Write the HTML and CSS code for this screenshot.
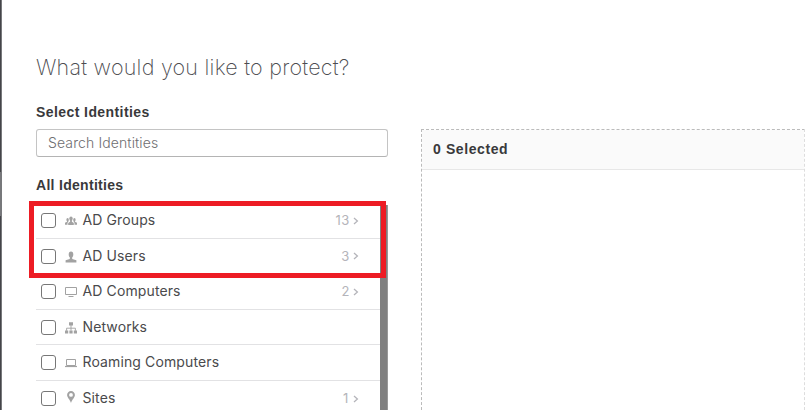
FILE: index.html
```html
<!DOCTYPE html>
<html lang="en">
<head>
<meta charset="utf-8">
<title>Select Identities</title>
<link rel="stylesheet" href="styles.css">
</head>
<body>
<div class="page">
  <div class="rail"><i class="rail-mid"></i></div>
  <main class="content">
    <h1 class="title">What would you like to protect?</h1>
    <div class="columns">
      <section class="picker">
        <h2 class="label">Select Identities</h2>
        <input class="search" type="text" placeholder="Search Identities">
        <h2 class="label all">All Identities</h2>
        <div class="list-wrap">
          <ul class="list">
            <li class="row"><i class="box"></i>
              <svg class="icon" viewBox="0 0 12 12" fill="#a2a2a2"><ellipse cx="6" cy="3.6" rx="1.7" ry="2.2"/><path d="M3.2 10V8L5.1 6.800V5h1.800v1.800L8.800 8v2z"/><ellipse cx="2.600" cy="4.800" rx="1.200" ry="1.700"/><ellipse cx="9.400" cy="4.800" rx="1.200" ry="1.700"/><path d="M0 9.700V7.800l2-1V5.500h1.300v1.600l-.8.700v1.900zM12 9.700V7.800l-2-1V5.500H8.700v1.600l.8.700v1.900z"/></svg>
              <span class="name">AD Groups</span><span class="count">13</span><svg class="chev" viewBox="0 0 6 8"><path d="M1 1l3.4 3L1 7"/></svg></li>
            <li class="row"><i class="box"></i>
              <svg class="icon" viewBox="0 0 12 12" fill="#a2a2a2"><ellipse cx="6" cy="3.5" rx="2.3" ry="3"/><path d="M4.800 5h2.400v3l4.200 1.300v2.200H.6V9.300L4.800 8z"/></svg>
              <span class="name">AD Users</span><span class="count">3</span><svg class="chev" viewBox="0 0 6 8"><path d="M1 1l3.4 3L1 7"/></svg></li>
            <li class="row"><i class="box"></i>
              <svg class="icon" viewBox="0 0 12 12" fill="none" stroke="#a2a2a2"><path d="M.5 1.500h11v7H.5z"/><path d="M3.500 10.500h5"/></svg>
              <span class="name">AD Computers</span><span class="count">2</span><svg class="chev" viewBox="0 0 6 8"><path d="M1 1l3.4 3L1 7"/></svg></li>
            <li class="row"><i class="box"></i>
              <svg class="icon" viewBox="0 0 12 12" fill="#a2a2a2"><path d="M4 .2h4v3.200H4zM0 8.600h3.200v3H0zM4.400 8.600h3.200v3H4.400zM8.800 8.600H12v3H8.800z"/><path d="M6 3v5.500M1.600 8.800V6.200h8.800v2.600" fill="none" stroke="#a2a2a2" stroke-width=".9"/></svg>
              <span class="name">Networks</span></li>
            <li class="row"><i class="box"></i>
              <svg class="icon" viewBox="0 0 12 12" fill="none" stroke="#a2a2a2"><path d="M1.500 2.500h9v6h-9z"/><path d="M0 9.500h12" stroke-width="1.200"/></svg>
              <span class="name">Roaming Computers</span></li>
            <li class="row"><i class="box"></i>
              <svg class="icon pin" viewBox="0 0 12 12" fill="#a2a2a2" fill-rule="evenodd"><path d="M6 0a3.900 3.900 0 0 0-3.900 4C2.100 6.500 5 8.500 6 12c1-3.500 3.900-5.500 3.900-8A3.900 3.900 0 0 0 6 0zM6 2a1.900 1.900 0 1 1 0 3.800A1.900 1.900 0 0 1 6 2z"/></svg>
              <span class="name">Sites</span><span class="count one">1</span><svg class="chev" viewBox="0 0 6 8"><path d="M1 1l3.400 3L1 7"/></svg></li>
          </ul>
          <div class="scrollbar"></div>
          <div class="highlight"></div>
        </div>
      </section>
      <section class="selected">
        <header class="selected-head">0 Selected</header>
      </section>
    </div>
  </main>
</div>
</body>
</html>
```
FILE: styles.css
```css
* { box-sizing: border-box; }
body { margin: 0; background: #fff; color: #4a4a4c; font: 14px/20px Inter, "Liberation Sans", sans-serif; }
.page { display: flex; height: 410px; overflow: hidden; }
.rail { width: 2px; flex: none; background: #444549; border-right: 1px solid #77787b; padding-top: 172px; }
.rail-mid { display: block; height: 44px; background: #77787b; }
.content { flex: none; width: 803px; padding-left: 34px; }
.title { margin: 0; padding-top: 52px; height: 101px; font: 200 21.5px/30px Inter, "Liberation Sans", sans-serif; letter-spacing: .24px; color: #4c4c50; white-space: nowrap; }
.columns { display: flex; gap: 33px; height: 309px; }
.picker { width: 352px; flex: none; }
.label { margin: 0; padding-top: 1px; height: 28px; font: bold 14px/20px "Liberation Sans", sans-serif; letter-spacing: .42px; color: #39393b; white-space: nowrap; }
.search { display: block; width: 352px; height: 28px; margin: 0; padding: 0 12px 2px 11px; border: 1px solid #c4c4c4; border-bottom-color: #b4b4b4; border-radius: 3px; font: 300 14px/20px Inter, sans-serif; letter-spacing: .12px; outline: 0; }
.search::placeholder { color: #6e6e70; opacity: 1; }
.label.all { height: 46px; padding-top: 18px; letter-spacing: .3px; }
.list-wrap { position: relative; display: flex; height: 207px; }
.list { width: 344px; margin: 0; padding: 0; list-style: none; }
.row { display: flex; align-items: center; height: 35.55px; padding: 0 21px 0 5.4px; border-bottom: 1px solid #e2e2e4; }
.box { width: 15px; height: 15px; margin-top: 1px; border: 1px solid #777; border-radius: 3px; flex: none; }
.icon { width: 12px; height: 12px; margin: 2px 5.6px 0 8.5px; flex: none; }
.pin { margin-top: -2px; }
.name { flex: 1; white-space: nowrap; letter-spacing: .12px; }
.count { color: #b4b4ba; margin-right: 3px; font-size: 13px; letter-spacing: .6px; }
.count.one { margin-right: 4px; }
.chev { width: 6px; height: 8px; margin-top: 1px; fill: none; stroke: #b4b4ba; stroke-width: 1.3; }
.scrollbar { width: 8px; margin-top: 2px; background: #808080; border-right: 1px solid #999; }
.highlight { position: absolute; left: -7px; top: -2px; width: 357px; height: 77px; border: 5px solid #ed1c24; }
.selected { width: 384px; flex: none; margin-top: 28px; border: 1px dashed #bbb; border-right-color: #ddd; border-bottom: 0; }
.selected-head { height: 40px; padding: 9px 11px; background: #fafafa; border-bottom: 1px solid #e7e7e7; font: bold 14px/20px "Liberation Sans", sans-serif; letter-spacing: .6px; color: #39393b; }
```
